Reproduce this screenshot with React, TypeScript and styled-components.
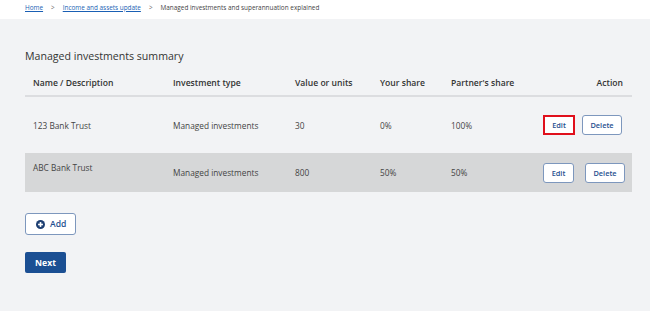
import React from 'react';
import styled, { createGlobalStyle } from 'styled-components';

const GlobalStyle = createGlobalStyle`
    html, body {
        margin: 0;
        padding: 0;
        background: #f2f3f5;
        font-family: "Open Sans", "Noto Sans", Arial, sans-serif;
        color: #333;
    }
`;

// ============================== Breadcrumb ==============================

const Crumbs = styled.nav`
    display: flex;
    align-items: flex-start;
    gap: 8px;

    height: 19px;
    padding: 3px 25px 0 25px;
    box-sizing: border-box;

    background: #fff;
    font-size: 6.4px;
    line-height: 10px;
    color: #444;
`;

const CrumbLink = styled.a`
    color: #1a5fb4;
    text-decoration: underline;
`;

const Sep = styled.span`
    color: #666;
`;

// ============================== Body ==============================

const Page = styled.main`
    padding: 29px 18px 38px 25px;
`;

const Title = styled.h2`
    margin: 0 0 4px 0;
    font-size: 10.6px;
    line-height: 16px;
    font-weight: 400;
    color: #333;
`;

const Table = styled.div`
    display: flex;
    flex-direction: column;
`;

const Row = styled.div<{ $shaded?: boolean; $height: number; $header?: boolean }>`
    display: grid;
    grid-template-columns: 140px 122px 85px 71px 76px 1fr;
    align-items: center;

    height: ${p => p.$height}px;
    padding: ${p => (p.$header ? '2px 8px 0 8px' : '0 8px')};
    box-sizing: border-box;

    background: ${p => (p.$shaded ? '#d6d7d8' : 'transparent')};
    border-bottom: ${p => (p.$header ? '2px solid #dcdde0' : 'none')};

    font-size: ${p => (p.$header ? '8.6px' : '8.3px')};
    font-weight: ${p => (p.$header ? 600 : 400)};
    color: ${p => (p.$header ? '#333' : '#444')};
`;

const Cell = styled.div<{ $top?: boolean }>`
    align-self: ${p => (p.$top ? 'start' : 'center')};
    padding-top: ${p => (p.$top ? '9px' : '0')};
`;

const Actions = styled.div<{ $gap: number; $shift: number }>`
    display: flex;
    justify-content: flex-end;
    gap: ${p => p.$gap}px;
    margin-right: ${p => p.$shift}px;
`;

const SmallButton = styled.button<{ $focus?: boolean; $w: number }>`
    width: ${p => p.$w}px;
    height: 20px;
    padding: 0;

    font-family: inherit;
    font-size: 7.4px;
    font-weight: 600;
    color: #1f4f8f;

    background: #fff;
    border: ${p => (p.$focus ? '2px solid #e0101c' : '1px solid #7d97bd')};
    border-radius: ${p => (p.$focus ? '0' : '3px')};
`;

const AddButton = styled.button`
    display: flex;
    align-items: center;
    gap: 5px;

    margin-top: 21px;
    width: 51px;
    height: 22px;
    padding: 0 0 0 10px;

    font-family: inherit;
    font-size: 8.6px;
    font-weight: 600;
    color: #1f4f8f;

    background: #fff;
    border: 1px solid #7d97bd;
    border-radius: 3px;
`;

const NextButton = styled.button`
    display: block;
    margin-top: 17px;
    width: 41px;
    height: 21px;
    padding: 0;

    font-family: inherit;
    font-size: 8.6px;
    font-weight: 700;
    color: #fff;

    background: #1b4f93;
    border: none;
    border-radius: 2px;
`;

function PlusIcon(): JSX.Element {
    return (
        <svg width="9" height="9" viewBox="0 0 10 10">
            <circle cx="5" cy="5" r="5" fill="#1d3f72" />
            <rect x="2.3" y="4.1" width="5.4" height="1.8" fill="#fff" />
            <rect x="4.1" y="2.3" width="1.8" height="5.4" fill="#fff" />
        </svg>
    );
}

export default function App(): JSX.Element {
    return (
        <>
            <GlobalStyle />
            <Crumbs>
                <CrumbLink href="#">Home</CrumbLink>
                <Sep>&gt;</Sep>
                <CrumbLink href="#">Income and assets update</CrumbLink>
                <Sep>&gt;</Sep>
                <span>Managed investments and superannuation explained</span>
            </Crumbs>
            <Page>
                <Title>Managed investments summary</Title>
                <Table>
                    <Row $header $height={29}>
                        <Cell>Name / Description</Cell>
                        <Cell>Investment type</Cell>
                        <Cell>Value or units</Cell>
                        <Cell>Your share</Cell>
                        <Cell>Partner's share</Cell>
                        <Cell style={{ textAlign: 'right', paddingRight: 1 }}>Action</Cell>
                    </Row>
                    <Row $height={56}>
                        <Cell>123 Bank Trust</Cell>
                        <Cell>Managed investments</Cell>
                        <Cell>30</Cell>
                        <Cell>0%</Cell>
                        <Cell>100%</Cell>
                        <Actions $gap={7} $shift={2}>
                            <SmallButton $focus $w={32}>Edit</SmallButton>
                            <SmallButton $w={40}>Delete</SmallButton>
                        </Actions>
                    </Row>
                    <Row $shaded $height={39}>
                        <Cell $top>ABC Bank Trust</Cell>
                        <Cell>Managed investments</Cell>
                        <Cell>800</Cell>
                        <Cell>50%</Cell>
                        <Cell>50%</Cell>
                        <Actions $gap={11} $shift={-1}>
                            <SmallButton $w={31}>Edit</SmallButton>
                            <SmallButton $w={40}>Delete</SmallButton>
                        </Actions>
                    </Row>
                </Table>
                <AddButton>
                    <PlusIcon />
                    Add
                </AddButton>
                <NextButton>Next</NextButton>
            </Page>
        </>
    );
}
